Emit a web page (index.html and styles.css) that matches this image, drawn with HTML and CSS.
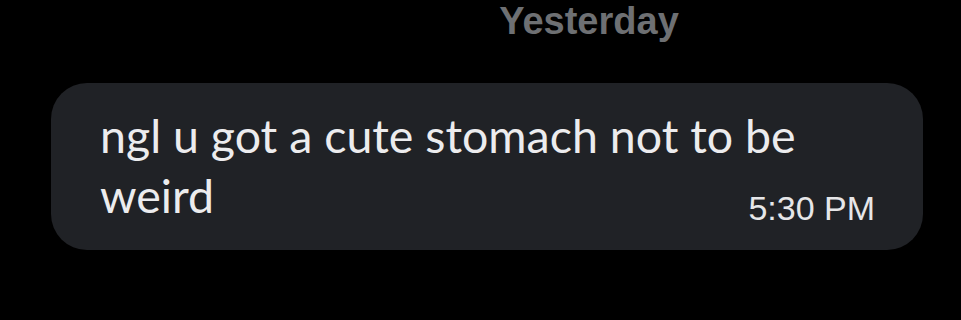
FILE: index.html
```html
<!DOCTYPE html>
<html>
<head>
<meta charset="utf-8">
<link rel="stylesheet" href="styles.css">
</head>
<body>
<div class="day"><span>Yesterday</span></div>
<div class="chat">
  <div class="bubble">
    <p class="text"><span>ngl u got a cute stomach not to be</span><br><span>weird</span></p>
    <div class="time"><span>5:30 PM</span></div>
  </div>
</div>
</body>
</html>
```
FILE: styles.css
```css
html, body {
  margin: 0;
  padding: 0;
  background: #000;
  width: 961px;
  height: 320px;
  overflow: hidden;
}
.day {
  box-sizing: border-box;
  width: 961px;
  padding-left: 217px;
  font-family: "Liberation Sans", Arial, sans-serif;
  font-weight: bold;
  font-size: 38px;
  color: #6e7073;
  text-align: center;
  line-height: 42px;
  height: 42px;
}
.chat {
  display: flex;
  flex-direction: column;
  padding: 0 38px 0 51px;
}
.bubble {
  margin-top: 41px;
  background: #202226;
  border-radius: 36px;
  height: 167px;
  box-sizing: border-box;
  padding: 22px 48px 0 49px;
  display: flex;
  flex-direction: column;
}
.text {
  margin: 0;
  font-family: "Lato", "Noto Sans", sans-serif;
  font-size: 46.5px;
  line-height: 60px;
  color: #ececee;
  align-self: flex-start;
}
.time {
  align-self: flex-end;
  margin-top: -37px;
  font-family: "Liberation Sans", Arial, sans-serif;
  font-size: 34px;
  line-height: 40px;
  color: #e6e6e8;
}
```
